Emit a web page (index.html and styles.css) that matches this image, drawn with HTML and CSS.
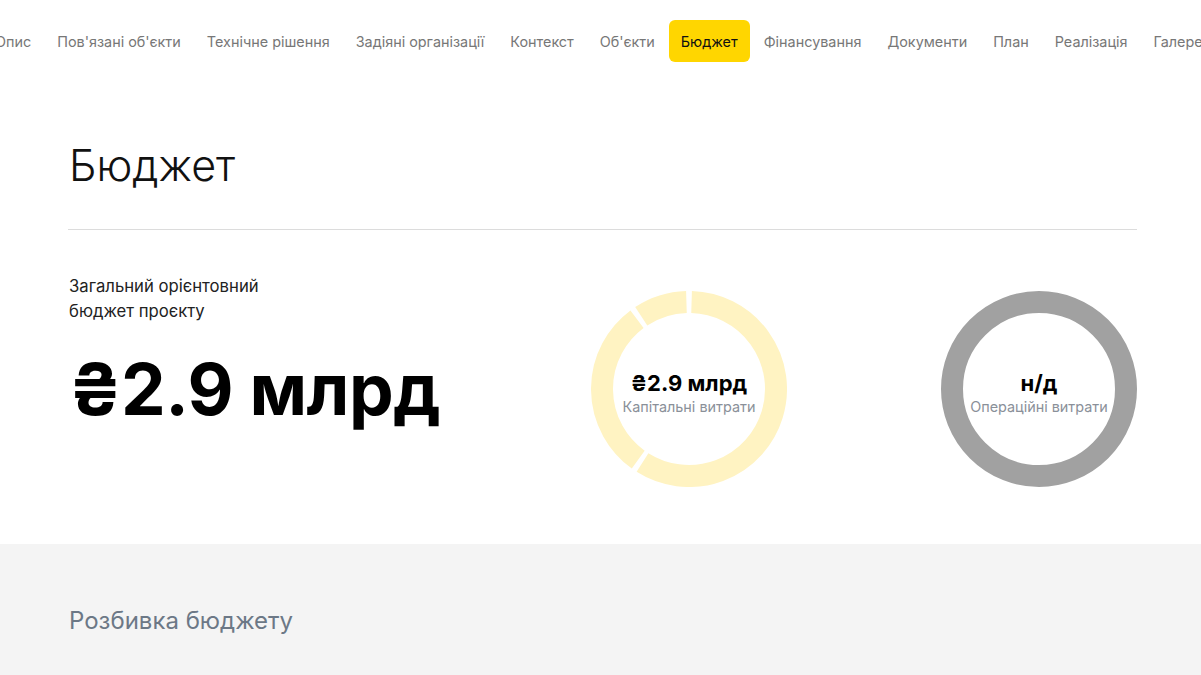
FILE: index.html
```html
<!DOCTYPE html>
<html lang="uk">
<head>
    <meta charset="UTF-8">
    <meta name="viewport" content="width=device-width, initial-scale=1.0">
    <title>Бюджет</title>
    <link rel="stylesheet" href="styles.css">
</head>
<body>
    <nav class="tabs">
        <a class="tab">Опис</a>
        <a class="tab">Пов'язані об'єкти</a>
        <a class="tab">Технічне рішення</a>
        <a class="tab">Задіяні організації</a>
        <a class="tab">Контекст</a>
        <a class="tab">Об'єкти</a>
        <a class="tab active">Бюджет</a>
        <a class="tab">Фінансування</a>
        <a class="tab">Документи</a>
        <a class="tab">План</a>
        <a class="tab">Реалізація</a>
        <a class="tab">Галерея</a>
    </nav>

    <section class="budget">
        <div class="container">
            <h1>Бюджет</h1>
            <div class="summary">
                <div class="total">
                    <p class="total-label">Загальний орієнтовний<br>бюджет проєкту</p>
                    <div class="total-value">₴2.9 млрд</div>
                </div>
                <div class="charts">
                    <div class="donut">
                        <svg width="196" height="196" viewBox="0 0 196 196">
                            <g fill="none" stroke="#fff3c2" stroke-width="22">
                                <path d="M100.58 11.04 A87 87 0 1 1 51.51 171.54"/>
                                <path d="M47.23 168.65 A87 87 0 0 1 46.01 28.24"/>
                                <path d="M50.24 25.29 A87 87 0 0 1 95.42 11.04"/>
                            </g>
                        </svg>
                        <div class="donut-text">
                            <strong>₴2.9 млрд</strong>
                            <span>Капітальні витрати</span>
                        </div>
                    </div>
                    <div class="donut">
                        <svg width="196" height="196" viewBox="0 0 196 196">
                            <circle cx="98" cy="98" r="87" fill="none" stroke="#a1a1a1" stroke-width="22"/>
                        </svg>
                        <div class="donut-text">
                            <strong>н/д</strong>
                            <span>Операційні витрати</span>
                        </div>
                    </div>
                </div>
            </div>
        </div>
    </section>

    <section class="breakdown">
        <div class="container">
            <h2>Розбивка бюджету</h2>
        </div>
    </section>
</body>
</html>
```

FILE: styles.css
```css
body {
    margin: 0;
    font-family: Inter, "Noto Sans", sans-serif;
    color: #111;
    background: #fff;
    overflow: hidden;
}
.tabs {
    display: flex;
    gap: 2px;
    padding-top: 20px;
    margin-left: -17px;
    white-space: nowrap;
}
.tab {
    display: block;
    padding: 0 12px;
    height: 42px;
    line-height: 43px;
    font-size: 14.4px;
    color: #777;
    border-radius: 6px;
}
.tab.active {
    background: #ffd600;
    color: #111;
}
.container {
    width: 1069px;
    margin: 0 auto;
    padding-left: 4px;
}
.budget {
    padding-top: 78px;
    height: 404px;
}
h1 {
    margin: 0;
    font-size: 43px;
    font-weight: 300;
    line-height: 50px;
    padding-left: 1px;
    padding-bottom: 39px;
    border-bottom: 1px solid #dcdcdc;
}
.summary {
    display: flex;
    justify-content: space-between;
    padding-top: 44px;
    padding-left: 1px;
}
.total-label {
    margin: 0;
    font-size: 16.7px;
    line-height: 25px;
    color: #222;
}
.total-value {
    margin-top: 25px;
    font-size: 71px;
    font-weight: 700;
    line-height: 80px;
    letter-spacing: -0.5px;
    color: #000;
}
.charts {
    display: flex;
    gap: 154px;
    padding-top: 17px;
}
.donut {
    position: relative;
    width: 196px;
    height: 196px;
}
.donut svg {
    display: block;
}
.donut-text {
    position: absolute;
    inset: 0;
    display: flex;
    flex-direction: column;
    align-items: center;
    justify-content: center;
    padding-top: 7px;
}
.donut-text strong {
    font-size: 22px;
    font-weight: 700;
    line-height: 28px;
    color: #000;
}
.donut-text span {
    font-size: 14.4px;
    line-height: 20px;
    color: #8a9099;
}
.breakdown {
    background: #f4f4f4;
    height: 131px;
}
.breakdown h2 {
    margin: 0;
    padding-top: 61px;
    padding-left: 1px;
    font-size: 24px;
    font-weight: 400;
    line-height: 32px;
    color: #6c7886;
}
```
